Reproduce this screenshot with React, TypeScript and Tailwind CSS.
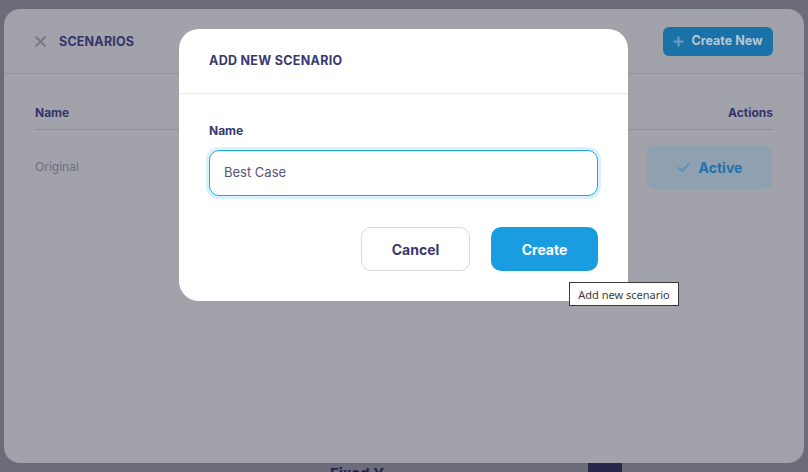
import React from "react";

export default function App() {
  return (
    <div
      className="relative w-[808px] h-[472px] overflow-hidden bg-[#6c6b7a] pt-[9px] pl-[4px]"
      style={{ fontFamily: "Inter, 'Liberation Sans', sans-serif" }}
    >
      {/* Scenarios panel (dimmed) */}
      <div className="w-[800px] h-[454px] rounded-[16px] bg-[#a2a2aa] flex flex-col">
        <div className="h-[65px] flex items-center justify-between pl-[30px] pr-[31px] border-b border-[#93939c]">
          <div className="flex items-center">
            <svg width="11" height="11" viewBox="0 0 11 11" className="ml-[1px] mt-[1px]">
              <path d="M1 1L10 10M10 1L1 10" stroke="#787887" strokeWidth="1.8" strokeLinecap="round" />
            </svg>
            <span className="ml-[13px] text-[12.5px] font-bold text-[#35346a] tracking-[0.2px] mt-[2px]">SCENARIOS</span>
          </div>
          <div className="w-[110px] h-[29px] rounded-[6px] bg-[#1b72a8] flex items-center justify-center gap-[7px]">
            <svg width="11" height="11" viewBox="0 0 11 11">
              <path d="M5.5 0.5V10.5M0.5 5.5H10.5" stroke="#6c9ec6" strokeWidth="2" />
            </svg>
            <span className="text-[12.5px] font-bold text-[#b8c6d4]">Create New</span>
          </div>
        </div>
        <div className="px-[30px]">
          <div className="flex justify-between items-end pt-[31px] pb-[8px] border-b border-[#8f8f99] text-[12px] font-bold leading-[16px] text-[#35346a]">
            <span className="ml-[1px]">Name</span>
            <span className="mr-[1px]">Actions</span>
          </div>
          <div className="flex justify-between items-center pt-[15px]">
            <span className="ml-[1px] text-[12px] text-[#6e6d82]">Original</span>
            <div className="w-[125px] h-[44px] rounded-[8px] bg-[#8fa0b1] flex items-center justify-center gap-[8px] mr-[2px]">
              <svg width="14" height="11" viewBox="0 0 14 11">
                <path d="M1.5 5.5L5 9L12.5 1.5" stroke="#5a92bd" strokeWidth="2.2" fill="none" />
              </svg>
              <span className="text-[14px] font-bold text-[#1b72ad]">Active</span>
            </div>
          </div>
        </div>
      </div>

      {/* bottom strip of underlying page */}
      <div className="relative h-[9px]">
        <span className="absolute left-[326px] top-[3px] text-[15px] font-bold text-[#25244a] leading-[16px]">Fixed Y</span>
        <div className="absolute left-[584px] top-0 w-[34px] h-[9px] bg-[#27274b]" />
      </div>

      {/* Modal */}
      <div className="absolute left-[179px] top-[29px] w-[449px] h-[272px] rounded-[20px] bg-white flex flex-col">
        <div className="h-[65px] flex items-center px-[30px] border-b border-[#ebebf1]">
          <span className="text-[12.5px] font-bold text-[#3a3970] tracking-[0.3px] mt-[1px]">ADD NEW SCENARIO</span>
        </div>
        <div className="px-[30px] pt-[29px]">
          <div className="text-[12px] font-bold leading-[16px] text-[#3a3970]">Name</div>
          <div className="mt-[11px] h-[46px] rounded-[10px] border border-[#1aa6ea] ring-[3px] ring-[#d9f1fc] flex items-center pl-[14px]">
            <span className="text-[13px] text-[#55547a]">Best Case</span>
          </div>
          <div className="mt-[31px] flex justify-end gap-[21px]">
            <div className="w-[109px] h-[44px] rounded-[10px] border border-[#d8d7e4] flex items-center justify-center">
              <span className="text-[14px] font-bold text-[#3a3970]">Cancel</span>
            </div>
            <div className="w-[107px] h-[44px] rounded-[10px] bg-[#1a9de0] flex items-center justify-center">
              <span className="text-[14px] font-bold text-white">Create</span>
            </div>
          </div>
        </div>
      </div>

      {/* Tooltip */}
      <div
        className="absolute left-[569px] top-[282px] w-[110px] h-[24px] bg-white border border-[#3a3a3a] flex items-center justify-center"
        style={{ fontFamily: "'Noto Sans', 'DejaVu Sans', sans-serif" }}
      >
        <span className="text-[11px] text-[#3c3c3c] leading-none">Add new scenario</span>
      </div>
    </div>
  );
}
